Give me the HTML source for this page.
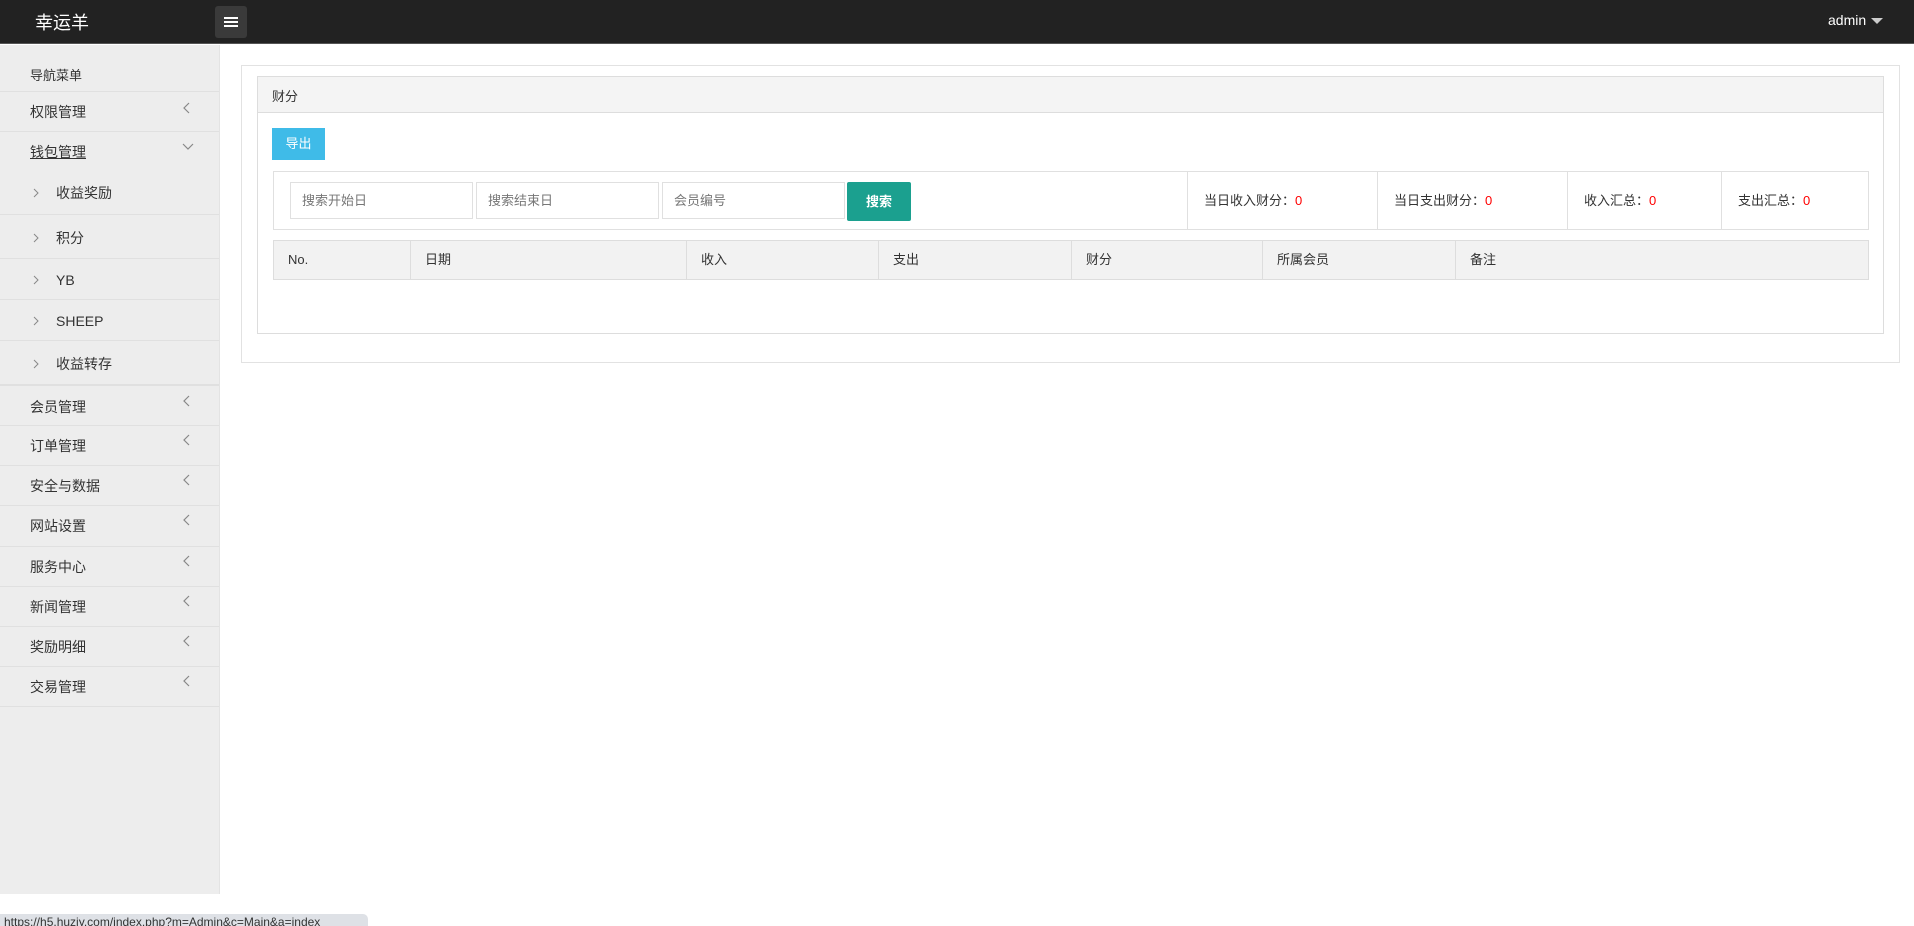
<!DOCTYPE html>
<html><head><meta charset="utf-8"><style>
*{margin:0;padding:0;box-sizing:border-box}
body{width:1914px;height:926px;overflow:hidden;background:#fff;font-family:"Liberation Sans","Noto Sans CJK SC",sans-serif;color:#333;position:relative}
.top{position:absolute;left:0;top:0;width:1914px;height:44px;background:#222;border-bottom:1px solid #555}
.logo{position:absolute;left:35px;top:9px;color:#fff;font-size:18px}
.tog{position:absolute;left:215px;top:6px;width:32px;height:32px;background:#3a3a3a;border-radius:3px}
.tog i{position:absolute;left:9px;width:14px;height:2px;background:#fff}
.admin{position:absolute;left:1828px;top:12px;color:#fff;font-size:14px}
.admin:after{content:"";display:inline-block;margin-left:5px;border-left:6px solid transparent;border-right:6px solid transparent;border-top:6px solid #ccc;vertical-align:middle}
.side{position:absolute;left:0;top:45px;width:220px;height:849px;background:#ededed;border-right:1px solid #e3e3e3}
.nav{position:absolute;left:30px;top:20px;font-size:13px}
.it{position:absolute;left:0;width:219px;border-top:1px solid #e0e0e0;font-size:14px;line-height:20px}
.it span{position:absolute;left:30px}
.it svg{position:absolute;left:181px}
.sub span{left:56px}
.sub svg{left:32px}
.box{position:absolute;left:241px;top:65px;width:1659px;height:298px;border:1px solid #e2e2e2}
.pan{position:absolute;left:257px;top:76px;width:1627px;height:258px;border:1px solid #ddd}
.ph{height:36px;background:#f4f4f4;border-bottom:1px solid #ddd;font-size:13px;padding:9px 14px}
.btn{position:absolute;left:272px;top:128px;width:53px;height:32px;background:#3fbbe8;color:#fff;font-size:13px;text-align:center;line-height:32px}
.flt{position:absolute;left:273px;top:171px;width:1596px;height:59px;border:1px solid #e0e0e0}
.inp{position:absolute;top:10px;width:183px;height:37px;border:1px solid #e0e0e0;font-size:13px;color:#777;padding:0 11px;line-height:35px}
.sb{position:absolute;left:573px;top:10px;width:64px;height:39px;background:#1ba08f;color:#fff;font-size:13px;font-weight:bold;text-align:center;line-height:39px;border-radius:2px}
.st{position:absolute;top:0;height:57px;border-left:1px solid #e0e0e0;font-size:13px;padding:0 16px;line-height:57px}
.st i{color:#f00;font-style:normal}
.th{position:absolute;left:273px;top:240px;width:1596px;height:40px;background:#f2f2f2;border:1px solid #ddd}
.th div{position:absolute;top:0;height:38px;border-left:1px solid #ddd;font-size:13px;padding:0 14px;line-height:38px}
.url{position:absolute;left:0;top:914px;width:368px;height:12px;background:#dee1e6;border-top-right-radius:5px;font-size:12px;color:#333;padding-left:4px;line-height:16px;overflow:hidden;white-space:nowrap}
</style></head><body>
<div class="top"><div class="logo">幸运羊</div><div class="tog"><i style="top:11px"></i><i style="top:15px"></i><i style="top:19px"></i></div><div class="admin">admin</div></div>
<div class="side">
<div class="nav">导航菜单</div>
<div class="it" style="top:46px;height:40px"><span style="top:10px">权限管理</span><svg style="top:9px" width="12" height="14"><path d="M8 2 L3 7 L8 12" fill="none" stroke="#888" stroke-width="1.2"/></svg></div>
<div class="it" style="top:86px;height:41px"><span style="top:10px;text-decoration:underline">钱包管理</span><svg style="top:10px" width="14" height="10"><path d="M2 2 L7 7 L12 2" fill="none" stroke="#888" stroke-width="1.2"/></svg></div>
<div class="it sub" style="top:127px;height:42px;border-top:none"><svg style="top:16px" width="8" height="10"><path d="M2 1 L6 5 L2 9" fill="none" stroke="#888" stroke-width="1"/></svg><span style="top:11px">收益奖励</span></div>
<div class="it sub" style="top:169px;height:44px"><svg style="top:18px" width="8" height="10"><path d="M2 1 L6 5 L2 9" fill="none" stroke="#888" stroke-width="1"/></svg><span style="top:13px">积分</span></div>
<div class="it sub" style="top:213px;height:41px"><svg style="top:16px" width="8" height="10"><path d="M2 1 L6 5 L2 9" fill="none" stroke="#888" stroke-width="1"/></svg><span style="top:11px">YB</span></div>
<div class="it sub" style="top:254px;height:41px"><svg style="top:16px" width="8" height="10"><path d="M2 1 L6 5 L2 9" fill="none" stroke="#888" stroke-width="1"/></svg><span style="top:11px">SHEEP</span></div>
<div class="it sub" style="top:295px;height:44px"><svg style="top:18px" width="8" height="10"><path d="M2 1 L6 5 L2 9" fill="none" stroke="#888" stroke-width="1"/></svg><span style="top:13px">收益转存</span></div>
<div class="it" style="top:339px;height:41px;border-top:2px solid #e0e0e0"><span style="top:11px">会员管理</span><svg style="top:8px" width="12" height="14"><path d="M8 2 L3 7 L8 12" fill="none" stroke="#888" stroke-width="1.2"/></svg></div>
<div class="it" style="top:380px;height:40px"><span style="top:10px">订单管理</span><svg style="top:7px" width="12" height="14"><path d="M8 2 L3 7 L8 12" fill="none" stroke="#888" stroke-width="1.2"/></svg></div>
<div class="it" style="top:420px;height:40px"><span style="top:10px">安全与数据</span><svg style="top:7px" width="12" height="14"><path d="M8 2 L3 7 L8 12" fill="none" stroke="#888" stroke-width="1.2"/></svg></div>
<div class="it" style="top:460px;height:41px"><span style="top:10px">网站设置</span><svg style="top:7px" width="12" height="14"><path d="M8 2 L3 7 L8 12" fill="none" stroke="#888" stroke-width="1.2"/></svg></div>
<div class="it" style="top:501px;height:40px"><span style="top:10px">服务中心</span><svg style="top:7px" width="12" height="14"><path d="M8 2 L3 7 L8 12" fill="none" stroke="#888" stroke-width="1.2"/></svg></div>
<div class="it" style="top:541px;height:40px"><span style="top:10px">新闻管理</span><svg style="top:7px" width="12" height="14"><path d="M8 2 L3 7 L8 12" fill="none" stroke="#888" stroke-width="1.2"/></svg></div>
<div class="it" style="top:581px;height:40px"><span style="top:10px">奖励明细</span><svg style="top:7px" width="12" height="14"><path d="M8 2 L3 7 L8 12" fill="none" stroke="#888" stroke-width="1.2"/></svg></div>
<div class="it" style="top:621px;height:41px;border-bottom:1px solid #e0e0e0"><span style="top:10px">交易管理</span><svg style="top:7px" width="12" height="14"><path d="M8 2 L3 7 L8 12" fill="none" stroke="#888" stroke-width="1.2"/></svg></div>
</div>
<div class="box"></div>
<div class="pan"><div class="ph">财分</div></div>
<div class="btn">导出</div>
<div class="flt">
<div class="inp" style="left:16px">搜索开始日</div>
<div class="inp" style="left:202px">搜索结束日</div>
<div class="inp" style="left:388px">会员编号</div>
<div class="sb">搜索</div>
<div class="st" style="left:913px;width:190px">当日收入财分：<i>0</i></div>
<div class="st" style="left:1103px;width:190px">当日支出财分：<i>0</i></div>
<div class="st" style="left:1293px;width:154px">收入汇总：<i>0</i></div>
<div class="st" style="left:1447px;width:147px">支出汇总：<i>0</i></div>
</div>
<div class="th">
<div style="left:0;border-left:none">No.</div>
<div style="left:136px">日期</div>
<div style="left:412px">收入</div>
<div style="left:604px">支出</div>
<div style="left:797px">财分</div>
<div style="left:988px">所属会员</div>
<div style="left:1181px">备注</div>
</div>
<div class="url">https://h5.huziy.com/index.php?m=Admin&amp;c=Main&amp;a=index</div>
</body></html>
